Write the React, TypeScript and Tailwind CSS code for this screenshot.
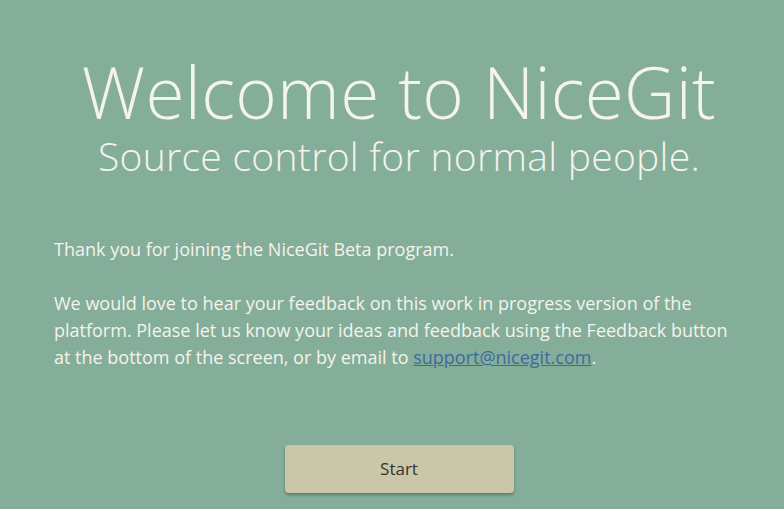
export default function App() {
  return (
    <div className="min-h-[509px] bg-[#84ae99] text-[#f4f3ec] font-['Open_Sans','Noto_Sans',sans-serif] overflow-hidden">
      <div className="pt-[49px] pl-[14px] text-center">
        <h1 className="text-[71px] leading-[86px] font-light tracking-[0.3px]">Welcome to NiceGit</h1>
        <h2 className="text-[39px] leading-[42px] font-light tracking-[0.3px]">Source control for normal people.</h2>
      </div>
      <div className="px-[54px] pt-[59px] text-[18px] leading-[27px]">
        <p>Thank you for joining the NiceGit Beta program.</p>
        <p className="mt-[27px]">
          We would love to hear your feedback on this work in progress version of the platform. Please let us know
          your ideas and feedback using the Feedback button at the bottom of the screen, or by email to{" "}
          <a href="#" className="text-[#3d6a9e] underline">support@nicegit.com</a>.
        </p>
      </div>
      <div className="flex justify-center pl-[14px] pt-[74px]">
        <button className="w-[229px] h-[48px] rounded bg-[#c9c7a8] text-[#333] text-[17px] shadow-[0_2px_3px_rgba(0,0,0,0.3)]">
          Start
        </button>
      </div>
    </div>
  );
}
